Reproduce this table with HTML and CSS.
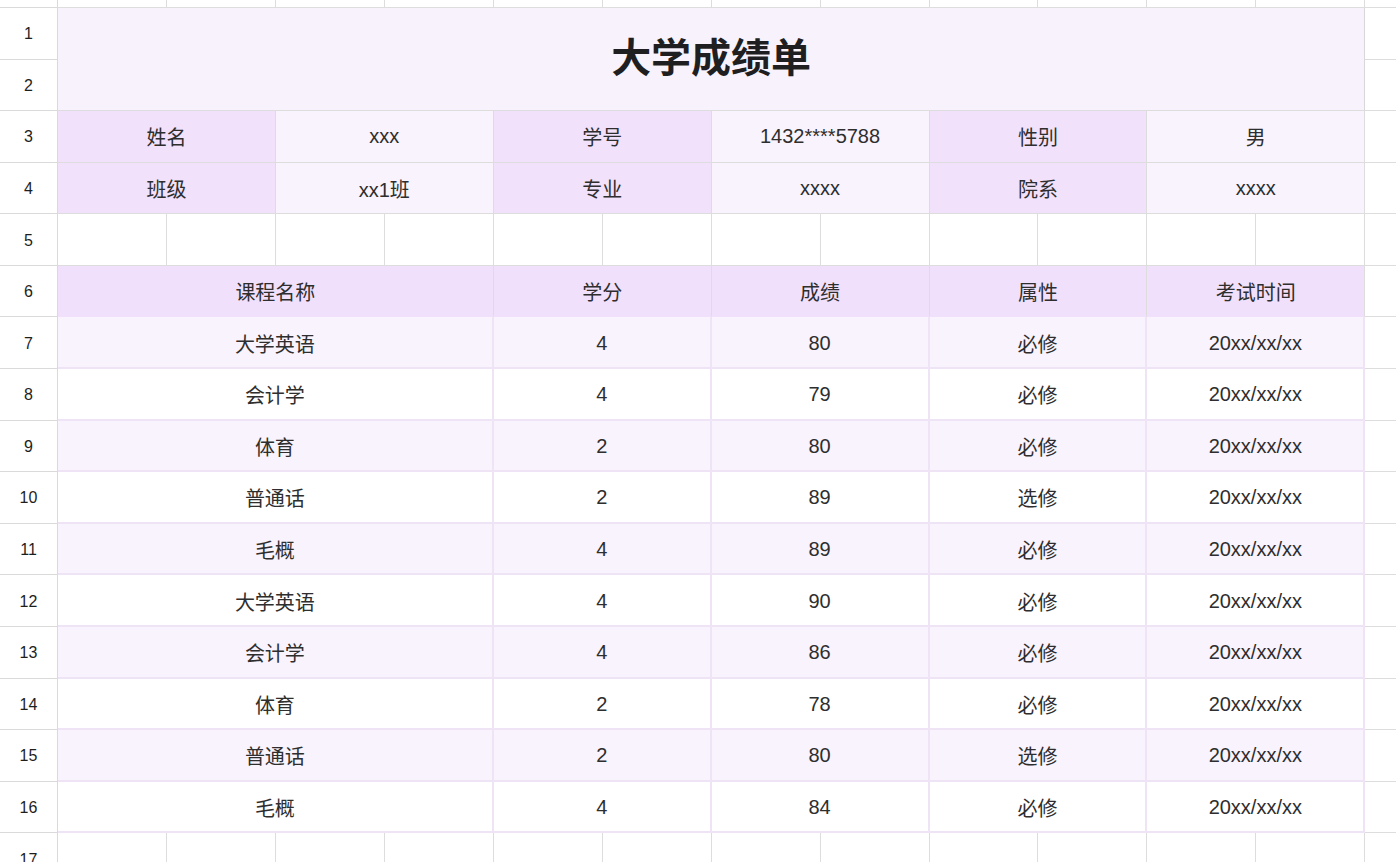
FILE: index.html
```html
<!DOCTYPE html>
<html lang="zh">
<head>
<meta charset="utf-8">
<title>大学成绩单</title>
<link rel="stylesheet" href="styles.css">
</head>
<body>
<div class="sheet">
  <!-- top partial row -->
  <div class="rh top"></div>
  <div class="c top"></div><div class="c top"></div><div class="c top"></div><div class="c top"></div>
  <div class="c top"></div><div class="c top"></div><div class="c top"></div><div class="c top"></div>
  <div class="c top"></div><div class="c top"></div><div class="c top"></div><div class="c top"></div>
  <div class="c top edge"></div>

  <!-- rows 1-2 title -->
  <div class="rh">1</div>
  <div class="c title span12 rows2">大学成绩单</div>
  <div class="c edge"></div>
  <div class="rh">2</div>
  <div class="c edge"></div>

  <!-- row 3 -->
  <div class="rh">3</div>
  <div class="c label span2">姓名</div>
  <div class="c value span2">xxx</div>
  <div class="c label span2">学号</div>
  <div class="c value span2">1432****5788</div>
  <div class="c label span2">性别</div>
  <div class="c value span2">男</div>
  <div class="c edge"></div>

  <!-- row 4 -->
  <div class="rh">4</div>
  <div class="c label span2">班级</div>
  <div class="c value span2">xx1班</div>
  <div class="c label span2">专业</div>
  <div class="c value span2">xxxx</div>
  <div class="c label span2">院系</div>
  <div class="c value span2">xxxx</div>
  <div class="c edge"></div>

  <!-- row 5 empty -->
  <div class="rh">5</div>
  <div class="c"></div><div class="c"></div><div class="c"></div><div class="c"></div>
  <div class="c"></div><div class="c"></div><div class="c"></div><div class="c"></div>
  <div class="c"></div><div class="c"></div><div class="c"></div><div class="c"></div>
  <div class="c edge"></div>

  <!-- row 6 header -->
  <div class="rh">6</div>
  <div class="c head span4">课程名称</div>
  <div class="c head span2">学分</div>
  <div class="c head span2">成绩</div>
  <div class="c head span2">属性</div>
  <div class="c head span2">考试时间</div>
  <div class="c edge"></div>

  <div class="rh">7</div>
  <div class="c d odd span4">大学英语</div><div class="c d odd span2">4</div><div class="c d odd span2">80</div><div class="c d odd span2">必修</div><div class="c d odd span2">20xx/xx/xx</div>
  <div class="c edge"></div>

  <div class="rh">8</div>
  <div class="c d span4">会计学</div><div class="c d span2">4</div><div class="c d span2">79</div><div class="c d span2">必修</div><div class="c d span2">20xx/xx/xx</div>
  <div class="c edge"></div>

  <div class="rh">9</div>
  <div class="c d odd span4">体育</div><div class="c d odd span2">2</div><div class="c d odd span2">80</div><div class="c d odd span2">必修</div><div class="c d odd span2">20xx/xx/xx</div>
  <div class="c edge"></div>

  <div class="rh">10</div>
  <div class="c d span4">普通话</div><div class="c d span2">2</div><div class="c d span2">89</div><div class="c d span2">选修</div><div class="c d span2">20xx/xx/xx</div>
  <div class="c edge"></div>

  <div class="rh">11</div>
  <div class="c d odd span4">毛概</div><div class="c d odd span2">4</div><div class="c d odd span2">89</div><div class="c d odd span2">必修</div><div class="c d odd span2">20xx/xx/xx</div>
  <div class="c edge"></div>

  <div class="rh">12</div>
  <div class="c d span4">大学英语</div><div class="c d span2">4</div><div class="c d span2">90</div><div class="c d span2">必修</div><div class="c d span2">20xx/xx/xx</div>
  <div class="c edge"></div>

  <div class="rh">13</div>
  <div class="c d odd span4">会计学</div><div class="c d odd span2">4</div><div class="c d odd span2">86</div><div class="c d odd span2">必修</div><div class="c d odd span2">20xx/xx/xx</div>
  <div class="c edge"></div>

  <div class="rh">14</div>
  <div class="c d span4">体育</div><div class="c d span2">2</div><div class="c d span2">78</div><div class="c d span2">必修</div><div class="c d span2">20xx/xx/xx</div>
  <div class="c edge"></div>

  <div class="rh">15</div>
  <div class="c d odd span4">普通话</div><div class="c d odd span2">2</div><div class="c d odd span2">80</div><div class="c d odd span2">选修</div><div class="c d odd span2">20xx/xx/xx</div>
  <div class="c edge"></div>

  <div class="rh">16</div>
  <div class="c d span4">毛概</div><div class="c d span2">4</div><div class="c d span2">84</div><div class="c d span2">必修</div><div class="c d span2">20xx/xx/xx</div>
  <div class="c edge"></div>

  <!-- row 17 -->
  <div class="rh">17</div>
  <div class="c"></div><div class="c"></div><div class="c"></div><div class="c"></div>
  <div class="c"></div><div class="c"></div><div class="c"></div><div class="c"></div>
  <div class="c"></div><div class="c"></div><div class="c"></div><div class="c"></div>
  <div class="c edge"></div>
</div>
</body>
</html>
```

FILE: styles.css
```css
html, body {
  margin: 0;
  padding: 0;
  background: #ffffff;
  overflow: hidden;
}

.sheet {
  display: grid;
  grid-template-columns: 58px repeat(12, 108.95px) 1fr;
  grid-template-rows: 8px repeat(17, 51.58px);
  width: 1396px;
  height: 862px;
  overflow: hidden;
  font-family: "Liberation Sans", "Noto Sans CJK SC", sans-serif;
  color: #2e2e2e;
}

.rh, .c {
  box-sizing: border-box;
  display: flex;
  align-items: center;
  justify-content: center;
  white-space: nowrap;
  overflow: hidden;
}

.rh {
  grid-column: 1;
  border-right: 1px solid #dadada;
  border-bottom: 1px solid #dadada;
  font-size: 16px;
  color: #1e1e1e;
  background: #ffffff;
}

.rh:not(.top) {
  padding-top: 2px;
}

.c {
  border-right: 1px solid #dddddd;
  border-bottom: 1px solid #dddddd;
  font-size: 20px;
}

.c.edge {
  border-right: none;
}

.span2 { grid-column: span 2; }
.span4 { grid-column: span 4; }
.span12 { grid-column: span 12; }
.rows2 { grid-row: span 2; }

.title {
  background: #f8f2fd;
  font-family: "Noto Sans CJK SC", sans-serif;
  font-weight: 700;
  font-size: 40px;
  color: #1f1f22;
  padding-bottom: 9px;
  border-right-color: #d8d8d8;
}

.label {
  background: #f1e1fb;
}

.value {
  background: #f9f3fd;
}

.head {
  background: #f1e0fb;
  border-bottom-color: #f1e0fb;
}

.d {
  background: #ffffff;
  border-right: 2px solid #efe4f6;
  border-bottom: 2px solid #efe4f6;
  padding-top: 2px;
}

.d.odd {
  background: #f9f3fd;
}
```
